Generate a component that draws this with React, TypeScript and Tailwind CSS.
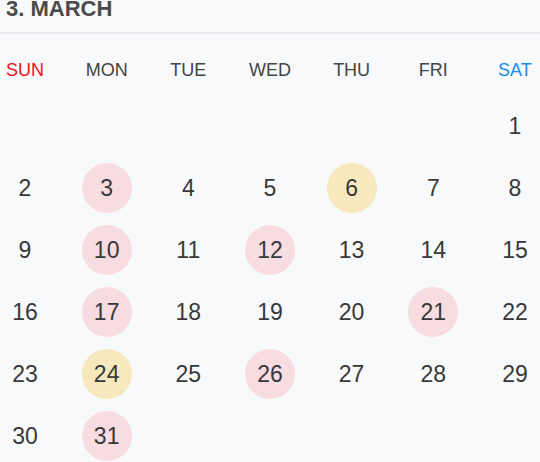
const WEEKDAYS = ["SUN", "MON", "TUE", "WED", "THU", "FRI", "SAT"];

// day -> highlight kind
const marks: Record<number, "pink" | "yellow"> = {
  3: "pink",
  6: "yellow",
  10: "pink",
  12: "pink",
  17: "pink",
  21: "pink",
  24: "yellow",
  26: "pink",
  31: "pink",
};

// March starts on Saturday
const weeks: (number | null)[][] = [];
{
  let week: (number | null)[] = Array(6).fill(null);
  for (let d = 1; d <= 31; d++) {
    week.push(d);
    if (week.length === 7) {
      weeks.push(week);
      week = [];
    }
  }
  if (week.length) weeks.push([...week, ...Array(7 - week.length).fill(null)]);
}

export default function App() {
  return (
    <div
      className="h-[462px] w-[540px] overflow-hidden bg-[#f8f9fb] text-[#383838]"
      style={{ fontFamily: '"Liberation Sans", Arial, sans-serif' }}
    >
      <div className="border-b-2 border-[#e8e9ec] pb-[14px] pl-[6px]">
        <h1 className="text-[22px] font-bold leading-[18px] text-[#4a4a4a]">3. MARCH</h1>
      </div>

      <div className="mt-[24px] flex justify-between">
        {WEEKDAYS.map((w, i) => (
          <div
            key={w}
            className={`w-[50px] text-center text-[18px] leading-[24px] ${
              i === 0 ? "text-[#e8141c]" : i === 6 ? "text-[#1a8cea]" : "text-[#444]"
            }`}
          >
            {w}
          </div>
        ))}
      </div>

      <div className="mt-[19px] flex flex-col gap-[12px]">
        {weeks.map((week, wi) => (
          <div key={wi} className="flex justify-between">
            {week.map((d, di) => (
              <div
                key={di}
                className={`flex h-[50px] w-[50px] items-center justify-center rounded-full text-[23px] ${
                  d && marks[d] === "pink"
                    ? "bg-[#f7dce1]"
                    : d && marks[d] === "yellow"
                      ? "bg-[#f7e9bd]"
                      : ""
                }`}
              >
                {d ?? ""}
              </div>
            ))}
          </div>
        ))}
      </div>
    </div>
  );
}
